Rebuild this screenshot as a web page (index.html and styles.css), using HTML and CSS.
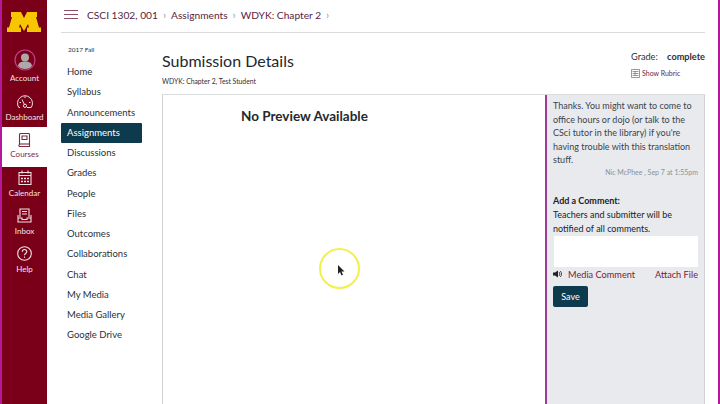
FILE: index.html
```html
<!DOCTYPE html>
<html lang="en">
<head>
<meta charset="utf-8">
<title>Submission Details</title>
<link rel="stylesheet" href="styles.css">
</head>
<body>
<div class="app">
  <aside class="rail">
    <div class="logo">
      <svg width="34" height="20" viewBox="0 0 34 20"><path fill="#f7c600" d="M0 20V15.500H2L5 5H4V0H14L17 6L20 0H30V5H29L32 15.500H34V20H20V15.500H22L21 12L17 19L13 12L12 15.500H14V20Z"/></svg>
    </div>
    <a class="rail-item account">
      <svg class="ico" width="22" height="22" viewBox="0 0 22 22"><circle cx="11" cy="11" r="10" fill="#7a0019" stroke="#c2408f" stroke-width="1.200"/><circle cx="11" cy="8.500" r="4" fill="#b0a7aa"/><path fill="#b0a7aa" d="M4 17c.5-3.500 3-4.500 7-4.500s6.500 1 7 4.500c-1.500 2-4 3-7 3s-5.500-1-7-3z"/></svg>
      <span>Account</span>
    </a>
    <a class="rail-item dash">
      <svg class="ico" width="16" height="13" viewBox="0 0 16 13" fill="none" stroke="#f1dfe3" stroke-width="1"><path d="M3 12.500H1.800A7.500 7.500 0 1 1 14.200 12.500H10"/><circle cx="8" cy="10.800" r="1.600"/><path d="M7.300 9.300L5 4.500M2.500 7.500H4M13.500 7.500H12M8 1.500V3"/></svg>
      <span>Dashboard</span>
    </a>
    <a class="rail-item courses">
      <svg class="ico" width="13" height="14" viewBox="0 0 13 14" fill="none" stroke="#7a2a40" stroke-width="1.100"><path d="M1.500 11.500V1.500a1 1 0 0 1 1-1h8a1 1 0 0 1 1 1v12h-9a1 1 0 0 1-1-2z"/><path d="M1.500 11h10"/><path d="M4 3h5v3.500H4z"/></svg>
      <span>Courses</span>
    </a>
    <a class="rail-item cal">
      <svg class="ico" width="14" height="15" viewBox="0 0 14 15" fill="none" stroke="#f1dfe3" stroke-width="1.100"><path d="M1 2.500h12v12H1zM1 5.500h12M4 .5v3M10 .5v3"/><path stroke-width="1.500" stroke-dasharray="2 1" d="M3 8.500h8M3 11.500h8"/></svg>
      <span>Calendar</span>
    </a>
    <a class="rail-item inbox">
      <svg class="ico" width="15" height="15" viewBox="0 0 15 15" fill="none" stroke="#f1dfe3" stroke-width="1.100"><path d="M3 9V1h9v8M5 3.500h5M5 6h5"/><path d="M1 7v7h13V7M1 10h4v1.500h5V10h4"/></svg>
      <span>Inbox</span>
    </a>
    <a class="rail-item help">
      <svg class="ico" width="15" height="15" viewBox="0 0 15 15" fill="none" stroke="#f1dfe3" stroke-width="1.100"><circle cx="7.500" cy="7.500" r="6.800"/><path d="M5.300 5.800c0-3 4.500-3 4.500 0 0 1.700-2.300 1.700-2.300 3.500"/><path d="M7.500 10.500v1.300"/></svg>
      <span>Help</span>
    </a>
  </aside>

  <div class="page">
    <header class="topbar">
      <div class="burger"><i></i><i></i><i></i></div>
      <nav class="crumbs">
        <a>CSCI 1302, 001</a><b>&rsaquo;</b><a>Assignments</a><b>&rsaquo;</b><a>WDYK: Chapter 2</a><b>&rsaquo;</b>
      </nav>
    </header>
    <div class="body">
      <nav class="menu">
        <div class="term">2017 Fall</div>
        <a>Home</a>
        <a>Syllabus</a>
        <a>Announcements</a>
        <a class="active">Assignments</a>
        <a>Discussions</a>
        <a>Grades</a>
        <a>People</a>
        <a>Files</a>
        <a>Outcomes</a>
        <a>Collaborations</a>
        <a>Chat</a>
        <a>My Media</a>
        <a>Media Gallery</a>
        <a>Google Drive</a>
      </nav>
      <main class="main">
        <div class="head">
          <div>
            <h1>Submission Details</h1>
            <p class="sub">WDYK: Chapter 2, Test Student</p>
          </div>
          <div class="grade">
            <div class="grade-line"><span>Grade:</span><strong>complete</strong></div>
            <a class="rubric">
              <svg width="9" height="9" viewBox="0 0 9 9" fill="none" stroke="#66707a" stroke-width=".7"><path d="M.5.500h8v8h-8zM1.500 2.500h6M1.500 4.500h6M1.500 6.500h6M4 2.500v4"/></svg>
              Show Rubric
            </a>
          </div>
        </div>
        <div class="split">
          <section class="preview"><h2>No Preview Available</h2></section>
          <aside class="comments">
            <p class="msg">Thanks. You might want to come to office hours or dojo (or talk to the CSci tutor in the library) if you're having trouble with this translation stuff.</p>
            <p class="meta">Nic McPhee , Sep 7 at 1:55pm</p>
            <h3>Add a Comment:</h3>
            <p class="note">Teachers and submitter will be notified of all comments.</p>
            <div class="box"></div>
            <div class="links">
              <a class="media">
                <svg width="9" height="8" viewBox="0 0 9 8"><path fill="#222" d="M0 2.500h2L5 .5v7l-3-2H0z"/><path fill="none" stroke="#222" stroke-width=".8" d="M6 2c1 1 1 3 0 4M7.300 1c1.600 1.600 1.600 4.400 0 6"/></svg>
                <span>Media Comment</span>
              </a>
              <a>Attach File</a>
            </div>
            <button class="save" type="button">Save</button>
          </aside>
        </div>
      </main>
    </div>
  </div>
</div>
<div class="spot">
  <svg width="8" height="11" viewBox="0 0 8 11"><path fill="#222" d="M1 0v9l2-2 1.500 3.500 1.500-.7L4.500 6.500H7.500z"/></svg>
</div>
</body>
</html>
```
FILE: styles.css
```css
* { box-sizing: border-box; }
html, body { margin: 0; height: 404px; overflow: hidden; background: #fff; }
body { font-family: Lato, "Open Sans", sans-serif; color: #2d3b45; }
a { color: inherit; text-decoration: none; }
p, h1, h2, h3 { margin: 0; }

.app { display: flex; height: 404px; border-left: 2px solid #b5179a; border-right: 2px solid #b5179a; }

.rail { width: 45px; flex: none; background: #7a0019; display: flex; flex-direction: column; align-items: stretch; }
.logo { height: 38px; padding: 12px 0 0 5px; line-height: 0; }
.rail-item { display: flex; flex-direction: column; align-items: center; color: #f1e3e6; font-size: 8px; line-height: 10px; }
.rail-item span { display: block; }
.ico { display: block; flex: none; }
.account { height: 44px; padding-top: 11px; gap: 2px; }
.dash { height: 45px; padding-top: 13px; gap: 4px; }
.courses { height: 40px; background: #fff; color: #7a2a40; padding-top: 6px; gap: 2px; }
.cal { height: 38px; padding-top: 3px; gap: 3px; }
.inbox { height: 38px; padding-top: 3px; gap: 3px; }
.help { height: 38px; padding-top: 3px; gap: 3px; }

.page { flex: 1; min-width: 0; display: flex; flex-direction: column; padding-left: 14px; padding-right: 13px; }
.topbar { height: 33px; flex: none; display: flex; align-items: center; border-bottom: 1px solid #d8dadc; padding: 0 0 3px 3px; }
.burger { width: 14px; display: flex; flex-direction: column; gap: 2.500px; margin-right: 9px; }
.burger i { display: block; height: 1.500px; background: #8b5064; }
.crumbs { display: flex; align-items: center; font-size: 10.200px; color: #5a1d3c; }
.crumbs b { font-weight: 400; color: #999; margin: 0 5px; font-size: 11px; }

.body { flex: 1; display: flex; min-height: 0; }
.menu { width: 101px; flex: none; padding-top: 12px; font-size: 9.500px; color: #27323a; display: flex; flex-direction: column; }
.term { font-size: 6.500px; height: 17px; padding-left: 7px; line-height: 9px; }
.menu a { height: 20.250px; line-height: 20px; padding-left: 6px; width: 81px; }
.menu a.active { background: #0e3a4e; color: #fff; border-radius: 1px; }

.main { flex: 1; min-width: 0; display: flex; flex-direction: column; }
.head { height: 61px; flex: none; display: flex; justify-content: space-between; }
h1 { font-size: 16px; font-weight: 400; color: #22282e; line-height: 22px; margin-top: 17px; }
.sub { font-size: 6.800px; line-height: 9px; margin-top: 5px; color: #2b3138; }
.grade { width: 74px; padding-top: 18px; font-size: 9.200px; color: #2b3138; }
.grade-line { display: flex; justify-content: space-between; line-height: 12px; }
.grade-line strong { font-weight: 700; }
.rubric { display: flex; align-items: center; gap: 2px; font-size: 7px; color: #6c1f45; margin-top: 5px; line-height: 10px; }

.split { flex: 1; display: flex; min-height: 0; border-top: 1px solid #dcdddf; }
.preview { width: 383px; flex: none; border-left: 1px solid #cfd1d3; }
h2 { font-size: 13.500px; font-weight: 700; color: #22282e; line-height: 18px; margin: 12px 0 0 78px; }
.comments { flex: 1; min-width: 0; background: #e8eaee; border-left: 2px solid #9c3b96; border-right: 1px solid #cfd1d3; padding: 4px 6px 0 6px; font-size: 9px; color: #3a444c; }
.msg { line-height: 13.500px; }
.meta { font-size: 7px; color: #8b9299; text-align: right; line-height: 10px; }
h3 { font-size: 9px; font-weight: 700; color: #222; line-height: 13px; margin-top: 17px; }
.note { color: #222; line-height: 14px; padding-top: 1px; }
.box { height: 31px; background: #fff; margin-left: 1px; }
.links { display: flex; justify-content: space-between; align-items: center; color: #7a1a35; font-size: 9.200px; line-height: 13px; margin-top: 1px; }
.media { display: flex; align-items: center; gap: 6px; }
.save { display: block; width: 35px; height: 21px; margin-top: 5px; border: 0; border-radius: 2px; background: #0e3a4e; color: #fff; font: 400 9px Lato, sans-serif; padding: 0; }

.spot { position: absolute; left: 319px; top: 248px; width: 41px; height: 41px; border: 2.500px solid #f4f04a; border-radius: 50%; }
.spot svg { position: absolute; left: 16px; top: 15px; }
```
